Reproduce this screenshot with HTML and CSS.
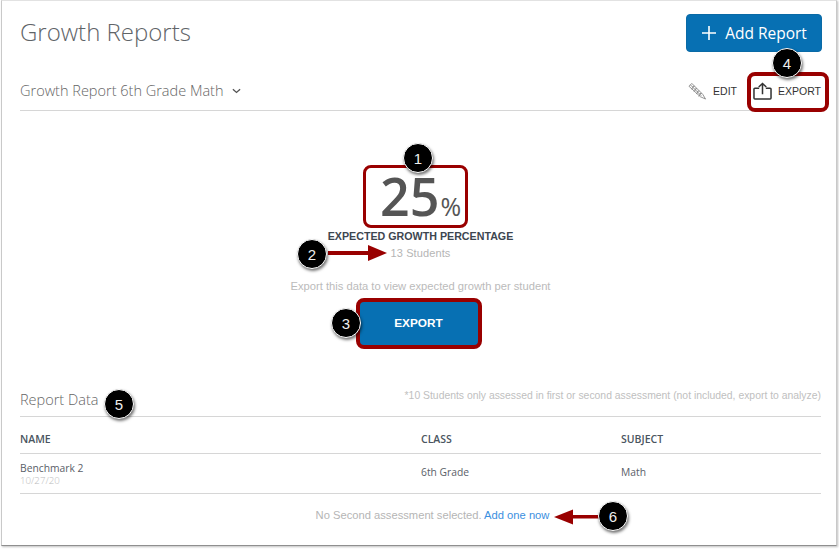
FILE: index.html
```html
<!DOCTYPE html>
<html lang="en">
<head>
<meta charset="utf-8">
<title>Growth Reports</title>
<link rel="stylesheet" href="styles.css">
</head>
<body>
<main class="frame">
  <header class="top">
    <h1 class="title">Growth Reports</h1>
    <button class="add-btn"><svg class="plus" viewBox="0 0 16 16" width="16" height="16"><path d="M8 1v14M1 8h14" stroke="#fff" stroke-width="1.6" fill="none"/></svg>Add Report</button>
  </header>
  <div class="subbar">
    <div class="report-name">Growth Report 6th Grade Math
      <svg class="chev" viewBox="0 0 10 6" width="9" height="6"><path d="M1 1l4 3.6L9 1" stroke="#555" stroke-width="1.5" fill="none"/></svg>
    </div>
    <div class="actions">
      <span class="action edit">
        <svg viewBox="0 0 20 19" width="19" height="18"><g fill="none" stroke="#808080" stroke-width="0.900"><path d="M1 4.500L4 1.500 15.500 13l3 5-5.500-2.500z"/><path d="M2.500 3l11.500 11.500M3.500 7.500l1.500-1 .2-1.800 1.800-.2M6 10l1.500-1 .2-1.800 1.800-.2M8.500 12.500l1.500-1 .2-1.800 1.800-.2M11 15l1.500-1 .2-1.800 1.800-.2"/></g></svg>
        EDIT
      </span>
      <span class="action export">
        <svg viewBox="0 0 20 19" width="19" height="18"><g fill="none" stroke="#333" stroke-width="1.600"><path d="M6.500 6.500H2a1 1 0 0 0-1 1V17a1 1 0 0 0 1 1h16a1 1 0 0 0 1-1V7.500a1 1 0 0 0-1-1h-4.500"/><path d="M10 13V1.500M6 5.300L10 1.500l4 3.800"/></g></svg>
        EXPORT
      </span>
    </div>
  </div>

  <section class="summary">
    <div class="pct"><span class="pct-num">25</span><span class="pct-sign">%</span></div>
    <div class="pct-label">EXPECTED GROWTH PERCENTAGE</div>
    <div class="students">13 Students</div>
    <div class="hint">Export this data to view expected growth per student</div>
    <button class="export-btn">EXPORT</button>
  </section>

  <section class="data">
    <div class="data-head">
      <h2 class="data-title">Report Data</h2>
      <span class="note">*10 Students only assessed in first or second assessment (not included, export to analyze)</span>
    </div>
    <div class="row head-row">
      <span>NAME</span><span>CLASS</span><span>SUBJECT</span>
    </div>
    <div class="row body-row">
      <span class="name-cell">Benchmark 2<small class="date">10/27/20</small></span><span>6th Grade</span><span>Math</span>
    </div>
    <p class="empty">No Second assessment selected. <a class="link" href="#">Add one now</a></p>
  </section>
</main>

<svg class="arrows" width="839" height="549" viewBox="0 0 839 549">
  <g fill="#990000">
    <rect x="328" y="251" width="41" height="4"/>
    <path d="M368 245l19 8-19 8z"/>
    <rect x="572" y="515" width="27" height="3.500"/>
    <path d="M554 517l19-7.500v15z"/>
  </g>
</svg>
<div class="hl hl-pct"></div>
<div class="hl hl-btn"></div>
<div class="hl hl-export"></div>
<div class="badge b1">1</div>
<div class="badge b2">2</div>
<div class="badge b3">3</div>
<div class="badge b4">4</div>
<div class="badge b5">5</div>
<div class="badge b6">6</div>
</body>
</html>
```
FILE: styles.css
```css
* { box-sizing: border-box; }
html, body { margin: 0; height: 100%; background: #fff; }
body { position: relative; width: 839px; height: 549px; overflow: hidden; font-family: "Open Sans", sans-serif; }

.frame {
  width: 836px;
  height: 546px;
  margin-left: 1px;
  border: 1px solid #c9c9c9;
  border-top-color: #e2e2e2;
  border-bottom: 1px solid #8f8f8f;
  box-shadow: 1px 1px 2px rgba(0,0,0,.25);
  padding: 12px 15px 0 18px;
  background: #fff;
}

.top { display: flex; justify-content: space-between; align-items: flex-start; height: 40px; }
.title { margin: 3px 0 0; font-size: 24px; line-height: 32px; font-weight: 300; color: #5f6468; }
.add-btn {
  display: flex; align-items: center; justify-content: center; gap: 8px;
  width: 136px; height: 38px; margin: 1px -1px 0 0; border: 1px solid #0a6aa6; border-radius: 4px;
  background: #0770b3; color: #fff; font: 400 15.500px "Open Sans", sans-serif; padding: 0;
}

.subbar {
  display: flex; justify-content: space-between; align-items: center;
  height: 58px; padding-top: 18px; border-bottom: 1px solid #d6d6d6;
}
.report-name { font-size: 14.500px; font-weight: 300; color: #666; display: flex; align-items: center; gap: 8px; }
.chev { margin-top: 1px; }
.actions { display: flex; align-items: center; gap: 16px; }
.action { display: flex; align-items: center; gap: 6px; font: 400 10.500px "Liberation Sans", sans-serif; color: #333; padding-top: 1px; }

.summary { display: flex; flex-direction: column; align-items: center; height: 271px; }
.pct { margin-top: 63px; height: 44px; margin-bottom: 11px; display: flex; align-items: baseline; color: #555; line-height: 44px; }
.pct-num { font-size: 52px; font-weight: 600; }
.pct-sign { font-size: 25px; font-weight: 400; margin-left: 1px; }
.pct-label { margin-top: 0; font: 700 10.700px/14px "Liberation Sans", sans-serif; color: #3d4650; }
.students { margin-top: 3px; font: 400 11px/14px "Liberation Sans", sans-serif; color: #b5b5b5; letter-spacing: .1px; }
.hint { margin-top: 19px; font: 400 11.200px/14px "Liberation Sans", sans-serif; color: #bbb; }
.export-btn {
  margin: 6px 4px 0 0; width: 124px; height: 48px; border: 0; border-radius: 6px;
  background: #0770b3; color: #fff; font: 700 11.800px "Liberation Sans", sans-serif;
}

.data-head { display: flex; justify-content: space-between; align-items: flex-end; height: 35px; border-bottom: 1px solid #d6d6d6; }
.data-title { margin: 0; padding-bottom: 6px; font-size: 14.500px; line-height: 20px; font-weight: 300; color: #666; }
.note { padding-bottom: 13px; font: 400 10.400px/14px "Liberation Sans", sans-serif; color: #c0c0c0; }

.row { display: grid; grid-template-columns: 401px 200px 1fr; align-items: center; border-bottom: 1px solid #d6d6d6; font-size: 10.300px; color: #5a6068; }
.head-row { height: 37px; padding-top: 8px; font-weight: 600; color: #4a5560; font-size: 10.500px; }
.body-row { height: 40px; padding-bottom: 4px; }
.name-cell { display: flex; flex-direction: column; margin-top: 6px; line-height: 13px; }
.date { font-size: 9.700px; line-height: 12px; color: #bbb; font-weight: 300; }

.empty { margin: 14px 0 0; padding-left: 24px; text-align: center; font: 400 11.200px/14px "Liberation Sans", sans-serif; color: #b5b5b5; }
.link { color: #3b8fe0; text-decoration: none; }

.arrows { position: absolute; left: 0; top: 0; pointer-events: none; }
.hl { position: absolute; border: 4px solid #990000; border-radius: 8px; }
.hl-pct { left: 363px; top: 165px; width: 105px; height: 63px; border-width: 3px; }
.hl-btn { left: 356px; top: 298px; width: 126px; height: 51px; }
.hl-export { left: 747px; top: 72px; width: 82px; height: 40px; }

.badge {
  position: absolute; width: 30px; height: 30px; border-radius: 50%;
  background: #000; border: 1px solid #fff; color: #eee;
  box-shadow: 1px 2px 3px rgba(0,0,0,.55);
  display: flex; align-items: center; justify-content: center;
  font: 400 15px "Liberation Sans", sans-serif;
}
.b1 { left: 403px; top: 143px; }
.b2 { left: 297px; top: 239px; }
.b3 { left: 331px; top: 308px; }
.b4 { left: 772px; top: 48px; }
.b5 { left: 104px; top: 389px; }
.b6 { left: 598px; top: 501px; }
```
